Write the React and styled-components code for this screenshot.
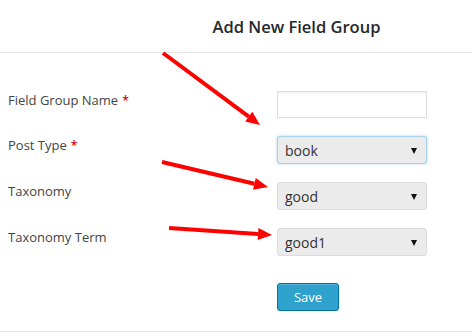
import React from "react";
import styled, { createGlobalStyle } from "styled-components";

const GlobalStyle = createGlobalStyle`
body {
  margin: 0;
  background: #fff;
  font-family: "Open Sans", "Noto Sans", sans-serif;
}
`

const Page = styled.div`
position: relative;
width: 472px;
height: 336px;
overflow: hidden;
`

const Header = styled.div`
height: 53px;
border-bottom: 1px solid #e5e5e5;
display: flex;
align-items: center;
justify-content: center;
padding-left: 121px;
box-sizing: border-box;
`

const Title = styled.h2`
margin: 0;
font-size: 16.5px;
font-weight: 600;
color: #23282d;
`

const Form = styled.div`
display: grid;
grid-template-columns: 277px 150px;
row-gap: 18px;
padding: 38px 0 20px;
border-bottom: 1px solid #e5e5e5;
`

const Label = styled.div`
padding-left: 8px;
font-size: 13px;
line-height: 18px;
color: #444;
`

const Req = styled.span`
color: #dd0000;
font-weight: 600;
margin-left: 4px;
font-size: 12px;
`

const TextInput = styled.input`
box-sizing: border-box;
width: 150px;
height: 27px;
border: 1px solid #ddd;
box-shadow: inset 0 1px 2px rgba(0,0,0,0.07);
outline: none;
`

const SelectWrap = styled.div`
position: relative;
width: 150px;
height: 28px;
`

const Select = styled.select`
appearance: none;
box-sizing: border-box;
width: 100%;
height: 100%;
padding: 0 7px;
border: 1px solid ${p => (p.$focus ? "#a9d1e8" : "#dddddd")};
box-shadow: ${p => (p.$focus ? "0 0 2px rgba(30,140,190,0.5)" : "none")};
border-radius: 3px;
background: #ebebeb;
font-family: "Open Sans", "Noto Sans", sans-serif;
font-size: 14px;
color: #333;
outline: none;
`

const Caret = styled.span`
position: absolute;
right: 10px;
top: 12px;
width: 0;
height: 0;
border-left: 3px solid transparent;
border-right: 3px solid transparent;
border-top: 6px solid #111;
pointer-events: none;
`

const ButtonCell = styled.div`
grid-column: 2;
margin-top: 9px;
`

const SaveButton = styled.button`
width: 62px;
height: 28px;
background: #2ea2cc;
border: 1px solid #0074a2;
border-radius: 3px;
color: #fff;
font-family: "Open Sans", "Noto Sans", sans-serif;
font-size: 13px;
box-shadow: inset 0 1px 0 rgba(120,200,230,0.5);
`

const Arrows = styled.svg`
position: absolute;
left: 0;
top: 0;
pointer-events: none;
`

const arrows = [
  [163, 53, 260, 125],
  [162, 162, 268, 187],
  [169, 228, 272, 235],
]

const Arrow = ({ x1, y1, x2, y2 }) => {
  const a = Math.atan2(y2 - y1, x2 - x1)
  const len = 14, w = 6
  const bx = x2 - len * Math.cos(a), by = y2 - len * Math.sin(a)
  const px = -Math.sin(a) * w, py = Math.cos(a) * w
  return (
    <g>
      <line x1={x1} y1={y1} x2={bx} y2={by} stroke="#f00" strokeWidth="4" />
      <polygon points={`${x2},${y2} ${bx + px},${by + py} ${bx - px},${by - py}`} fill="#f00" />
    </g>
  )
}

const Dropdown = ({ value, focus }) => (
  <SelectWrap>
    <Select $focus={focus} defaultValue={value}>
      <option value={value}>{value}</option>
    </Select>
    <Caret />
  </SelectWrap>
)

export default function App() {
  return (
    <Page>
      <GlobalStyle />
      <Header>
        <Title>Add New Field Group</Title>
      </Header>
      <Form>
        <Label>Field Group Name<Req>*</Req></Label>
        <TextInput type="text" />
        <Label>Post Type<Req>*</Req></Label>
        <Dropdown value="book" focus />
        <Label>Taxonomy</Label>
        <Dropdown value="good" />
        <Label>Taxonomy Term</Label>
        <Dropdown value="good1" />
        <ButtonCell>
          <SaveButton>Save</SaveButton>
        </ButtonCell>
      </Form>
      <Arrows width="472" height="336">
        {arrows.map(([x1, y1, x2, y2], i) => (
          <Arrow key={i} x1={x1} y1={y1} x2={x2} y2={y2} />
        ))}
      </Arrows>
    </Page>
  )
}
